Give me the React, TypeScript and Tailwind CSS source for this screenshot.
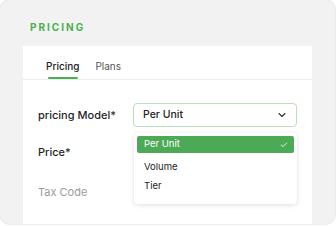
import { ChevronDown, Check } from "lucide-react";

const options = ["Per Unit", "Volume", "Tier"];

export default function App() {
  return (
    <div className="h-[226px] w-[336px] bg-white font-['Inter',sans-serif]">
      <div className="flex h-[224px] w-[335px] flex-col overflow-hidden rounded-[10px] bg-[#f2f2f2] shadow-[0_0_0_1px_#ececec]">
        {/* Section title */}
        <div className="px-[30px] pt-[21px] pb-[13px] text-[10px] font-bold leading-[12px] tracking-[0.2em] text-[#4caf50]">
          PRICING
        </div>

        <div className="mx-[23px] flex flex-1 flex-col bg-white">
          {/* Tabs */}
          <div className="flex gap-[16px] border-b border-[#ececec] px-[23px] pt-[13px]">
            <div className="flex flex-col items-center">
              <span className="text-[10px] font-medium leading-[14px] text-[#222]">Pricing</span>
              <span className="mt-[4px] h-[2px] w-[30px] rounded-full bg-[#4caf50]" />
            </div>
            <span className="pb-[6px] text-[10px] leading-[14px] text-[#555]">Plans</span>
          </div>

          {/* Form */}
          <div className="relative flex flex-col px-[15px] pt-[23px]">
            <div className="flex items-center gap-[17px]">
              <span className="w-[78px] whitespace-nowrap text-[11px] font-medium text-[#1f1f1f]">pricing Model*</span>
              <div className="flex h-[24px] w-[164px] items-center justify-between rounded-[4px] border border-[#b9e0bc] bg-white pr-[8px] pl-[9px]">
                <span className="text-[10.5px] font-medium text-[#222]">Per Unit</span>
                <ChevronDown className="h-[12px] w-[12px] text-[#333]" strokeWidth={2.2} />
              </div>
            </div>
            <span className="mt-[17px] text-[11px] font-medium leading-[16px] text-[#1f1f1f]">Price*</span>
            <span className="mt-[24px] text-[11px] leading-[16px] text-[#9a9a9a]">Tax Code</span>

            {/* Dropdown menu */}
            <div className="absolute top-[53px] left-[111px] flex w-[163px] flex-col rounded-[4px] bg-white p-[3px] pb-[8px] shadow-[0_1px_5px_rgba(0,0,0,0.13)]">
              {options.map((o, i) =>
                i === 0 ? (
                  <div
                    key={o}
                    className="mb-[5px] flex h-[17px] items-center justify-between rounded-[2px] bg-[#4caa57] pr-[6px] pl-[7px] text-[9.5px] text-white"
                  >
                    {o}
                    <Check className="h-[8px] w-[8px]" strokeWidth={2.5} />
                  </div>
                ) : (
                  <div key={o} className="flex h-[19px] items-center pl-[7px] text-[9.5px] text-[#222]">
                    {o}
                  </div>
                )
              )}
            </div>
          </div>
        </div>
      </div>
    </div>
  );
}
